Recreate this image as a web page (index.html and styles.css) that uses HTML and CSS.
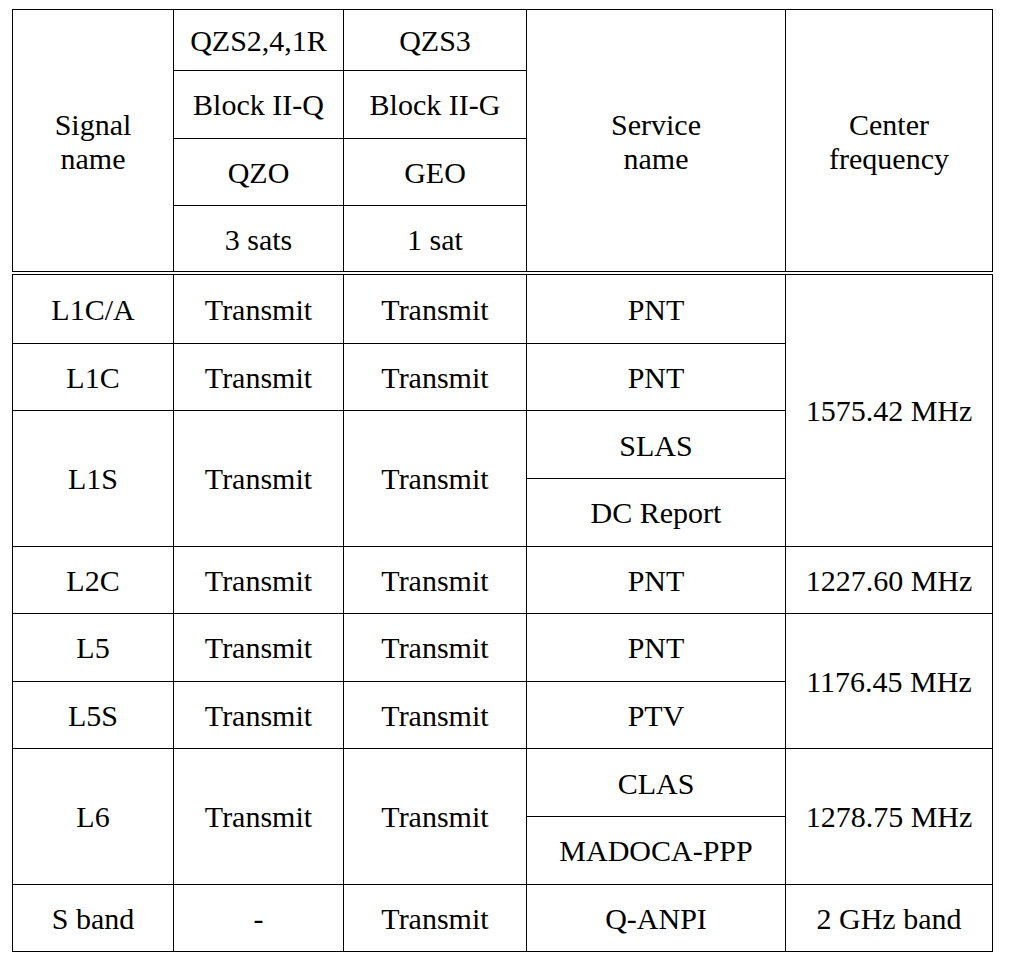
FILE: index.html
```html
<!DOCTYPE html>
<html>
<head>
<meta charset="utf-8">
<link rel="stylesheet" href="styles.css">
</head>
<body>
<table class="sig">
  <colgroup>
    <col class="c1"><col class="c2"><col class="c3"><col class="c4"><col class="c5">
  </colgroup>
  <thead>
    <tr class="h1">
      <td rowspan="4">Signal<br>name</td>
      <td>QZS2,4,1R</td>
      <td>QZS3</td>
      <td rowspan="4">Service<br>name</td>
      <td rowspan="4">Center<br>frequency</td>
    </tr>
    <tr class="r"><td>Block II-Q</td><td>Block II-G</td></tr>
    <tr class="r"><td>QZO</td><td>GEO</td></tr>
    <tr class="r"><td>3 sats</td><td>1 sat</td></tr>
  </thead>
  <tbody>
    <tr class="r first"><td>L1C/A</td><td>Transmit</td><td>Transmit</td><td>PNT</td><td rowspan="4">1575.42 MHz</td></tr>
    <tr class="r"><td>L1C</td><td>Transmit</td><td>Transmit</td><td>PNT</td></tr>
    <tr class="r"><td rowspan="2">L1S</td><td rowspan="2">Transmit</td><td rowspan="2">Transmit</td><td>SLAS</td></tr>
    <tr class="r"><td>DC Report</td></tr>
    <tr class="r"><td>L2C</td><td>Transmit</td><td>Transmit</td><td>PNT</td><td>1227.60 MHz</td></tr>
    <tr class="r"><td>L5</td><td>Transmit</td><td>Transmit</td><td>PNT</td><td rowspan="2">1176.45 MHz</td></tr>
    <tr class="r"><td>L5S</td><td>Transmit</td><td>Transmit</td><td>PTV</td></tr>
    <tr class="r"><td rowspan="2">L6</td><td rowspan="2">Transmit</td><td rowspan="2">Transmit</td><td>CLAS</td><td rowspan="2">1278.75 MHz</td></tr>
    <tr class="r"><td>MADOCA-PPP</td></tr>
    <tr class="r"><td>S band</td><td>-</td><td>Transmit</td><td>Q-ANPI</td><td>2 GHz band</td></tr>
  </tbody>
</table>
</body>
</html>
```

FILE: styles.css
```css
html, body {
  margin: 0;
  padding: 0;
  background: #fff;
}
body {
  padding: 9px 0 0 12px;
  font-family: "Liberation Serif", "Times New Roman", serif;
  color: #000;
}
.sig {
  border-collapse: collapse;
  table-layout: fixed;
  width: 980px;
  font-size: 30px;
}
.c1 { width: 161px; }
.c2 { width: 170px; }
.c3 { width: 183px; }
.c4 { width: 259px; }
.c5 { width: 207px; }
.sig td {
  border: 1px solid #000;
  text-align: center;
  vertical-align: middle;
  padding: 2px 2px 0;
  line-height: 34px;
}
.h1 { height: 61px; }
.r { height: 67.6px; }
.r.first { height: 70px; }
.sig thead tr:last-child td,
.sig thead td[rowspan] {
  border-bottom: 4px double #000;
}
```
